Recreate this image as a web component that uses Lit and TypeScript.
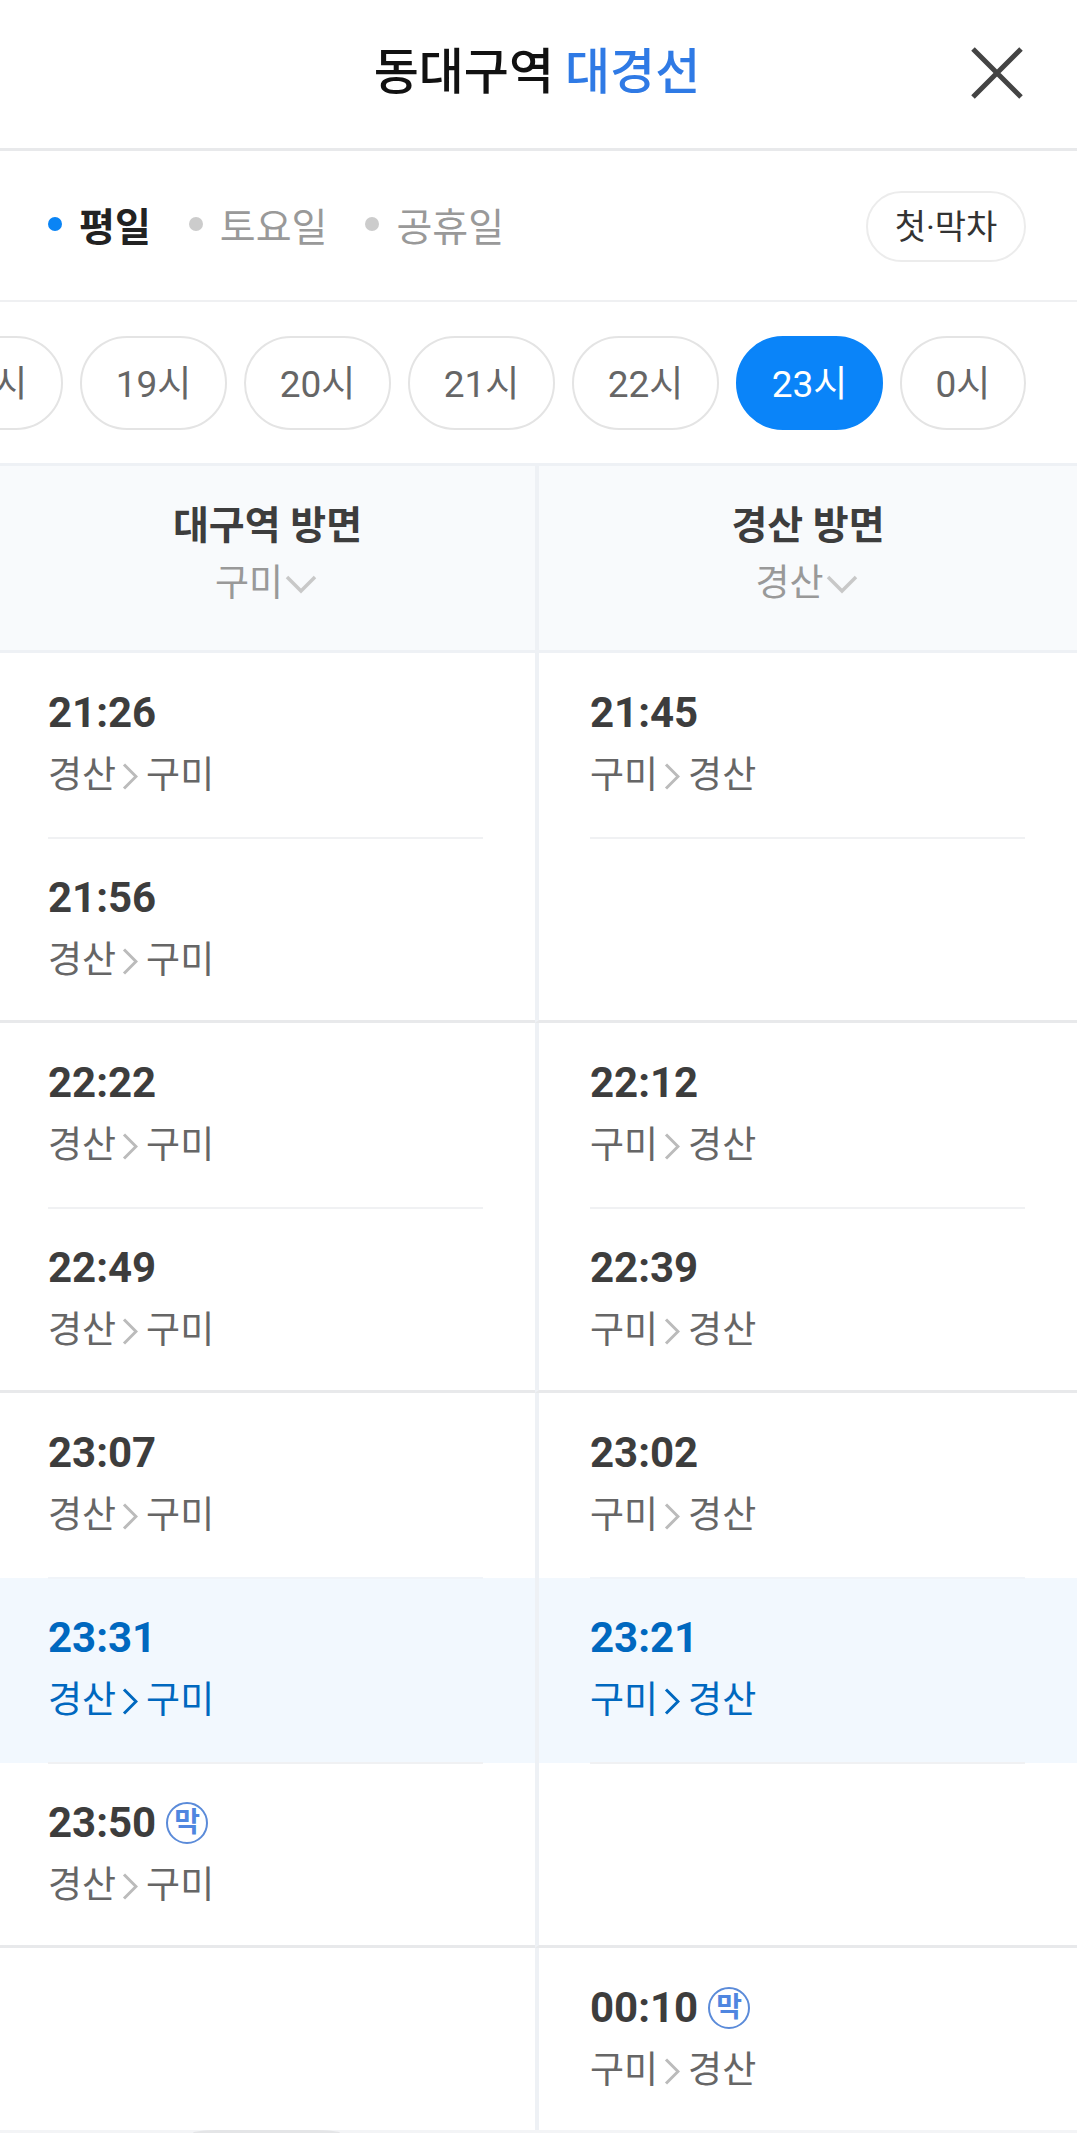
import { LitElement, html, css, svg } from "lit";
import { customElement } from "lit/decorators.js";

type Trip = { time: string; from: string; to: string; last?: boolean; now?: boolean };
type Row = { left?: Trip; right?: Trip };

const L = (time: string, extra: Partial<Trip> = {}): Trip => ({ time, from: "경산", to: "구미", ...extra });
const R = (time: string, extra: Partial<Trip> = {}): Trip => ({ time, from: "구미", to: "경산", ...extra });

const groups: Row[][] = [
  [{ left: L("21:26"), right: R("21:45") }, { left: L("21:56") }],
  [{ left: L("22:22"), right: R("22:12") }, { left: L("22:49"), right: R("22:39") }],
  [
    { left: L("23:07"), right: R("23:02") },
    { left: L("23:31", { now: true }), right: R("23:21", { now: true }) },
    { left: L("23:50", { last: true }) },
  ],
  [{ right: R("00:10", { last: true }) }],
];

const hours = ["18시", "19시", "20시", "21시", "22시", "23시", "0시"];

@customElement("app-root")
export class AppRoot extends LitElement {
  static styles = css`
    :host {
      display: block;
      width: 1077px;
      height: 2133px;
      overflow: hidden;
      position: relative;
      background: #fff;
      font-family: Roboto, "Noto Sans CJK KR", sans-serif;
      color: #222;
    }
    .head {
      height: 151px;
      box-sizing: border-box;
      border-bottom: 3px solid #e8e9eb;
      display: flex;
      align-items: center;
      justify-content: center;
      position: relative;
      font-size: 49px;
      font-weight: 500;
      color: #111;
      line-height: 1;
      padding: 0 3px 3px 0;
    }
    .head .line { color: #2f7ae5; margin-left: 11px; }
    .close { position: absolute; left: 970px; top: 46px; width: 54px; height: 54px; }
    .tabs {
      height: 151px;
      box-sizing: border-box;
      border-bottom: 2px solid #eff0f2;
      display: flex;
      align-items: center;
      padding: 0 51px 2px 48px;
    }
    .tab { display: flex; align-items: center; font-size: 39px; color: #999; margin-right: 38px; position: relative; top: -1px; }
    .tab i { width: 14px; height: 14px; border-radius: 50%; background: #ccc; margin-right: 17px; }
    .tab.on { color: #222; font-weight: 700; }
    .tab.on i { background: #0a84f5; }
    .first {
      margin: 4px 0 0 auto;
      width: 160px;
      height: 71px;
      box-sizing: border-box;
      border: 2px solid #ececec;
      border-radius: 36px;
      padding-bottom: 4px;
      display: flex;
      align-items: center;
      justify-content: center;
      font-size: 34px;
      color: #333;
    }
    .hours {
      height: 161px;
      display: flex;
      align-items: center;
      justify-content: flex-end;
      gap: 17px;
      padding-right: 51px;
      overflow: hidden;
    }
    .hour {
      flex: none;
      width: 147px;
      height: 94px;
      box-sizing: border-box;
      border: 2px solid #e4e4e4;
      border-radius: 47px;
      padding-bottom: 4px;
      display: flex;
      align-items: center;
      justify-content: center;
      font-size: 37px;
      color: #666;
    }
    .hour.zero { width: 126px; }
    .hour.on { background: #0a84f9; border-color: #0a84f9; color: #fff; }
    .cols { display: grid; grid-template-columns: 535px 542px; }
    .colhead {
      height: 190px;
      box-sizing: border-box;
      background: #f8fafc;
      border-top: 3px solid #eef1f5;
      border-bottom: 3px solid #eef1f5;
      display: flex;
      flex-direction: column;
      align-items: center;
    }
    .colhead + .colhead, .cell + .cell { border-left: 4px solid #eef1f5; }
    .colhead b { font-size: 39px; font-weight: 700; color: #3d3d3d; line-height: 60px; margin-top: 30px; }
    .sub { display: flex; align-items: center; font-size: 37px; color: #999; line-height: 52px; margin: 2px 3px 0 0; }
    .sub svg { width: 32px; height: 20px; margin-left: 2px; }
    .cell {
      height: 185px;
      padding: 30px 48px 0;
      box-sizing: border-box;
      position: relative;
      background: #fff;
    }
    .cell + .cell { padding-left: 51px; }
    .cell.now { background: #f2f8fe; }
    .sep {
      position: absolute;
      left: 48px;
      right: 52px;
      top: -1px;
      height: 2px;
      background: #f0f1f3;
    }
    .cell + .cell .sep { left: 51px; }
    .cell.now .sep { background: #f0f4f9; }
    .group > .cols:last-child .cell { border-bottom: 3px solid #e8e9eb; }
    .group.end > .cols:last-child .cell { border-bottom: 0; }
    .time {
      font-weight: 700;
      font-size: 42px;
      line-height: 60px;
      height: 60px;
      color: #3d3d3d;
      display: flex;
      align-items: center;
    }
    .now .time { color: #0068bf; }
    .badge {
      width: 42px;
      height: 42px;
      box-sizing: border-box;
      border: 2px solid #5b8bd9;
      border-radius: 50%;
      margin-left: 10px;
      display: flex;
      align-items: center;
      justify-content: center;
      font-size: 28px;
      font-weight: 700;
      color: #4f86e0;
      line-height: 1;
    }
    .route {
      display: flex;
      align-items: center;
      font-size: 37px;
      line-height: 56px;
      margin-top: 5px;
      color: #666;
    }
    .route svg { width: 16px; height: 27px; margin: 0 8px 0 6px; color: #bbb; }
    .now .route { color: #0068bf; }
    .now .route svg { color: #0068bf; }
    .foot { position: absolute; left: 0; right: 0; bottom: 0; height: 3px; background: #f3f4f6; }
    .grip { position: absolute; left: 193px; width: 147px; bottom: 0; height: 3px; border-radius: 24px 24px 0 0 / 3px 3px 0 0; background: #e4e5e7; }
  `;

  private closeIcon() {
    return html`<svg class="close" viewBox="0 0 54 54" fill="none" stroke="#444" stroke-width="5">
      <path d="M3 3 L51 51 M51 3 L3 51" />
    </svg>`;
  }

  private trip(t?: Trip, sep = false) {
    return html`<div class="cell ${t?.now ? "now" : ""}">
      ${sep ? html`<div class="sep"></div>` : ""}
      ${t
        ? html`<div class="time">${t.time}${t.last ? html`<span class="badge">막</span>` : ""}</div>
            <div class="route">
              ${t.from}<svg viewBox="0 0 16 27" fill="none" stroke="currentColor" stroke-width="3">
                ${svg`<path d="M2 1.5 L14 13.5 L2 25.5" />`}
              </svg>${t.to}
            </div>`
        : ""}
    </div>`;
  }

  render() {
    return html`
      <div class="head">
        <span>동대구역</span><span class="line">대경선</span>
        ${this.closeIcon()}
      </div>
      <div class="tabs">
        <div class="tab on"><i></i>평일</div>
        <div class="tab"><i></i>토요일</div>
        <div class="tab"><i></i>공휴일</div>
        <div class="first">첫·막차</div>
      </div>
      <div class="hours">
        ${hours.map(
          (h) => html`<div class="hour ${h === "23시" ? "on" : ""} ${h === "0시" ? "zero" : ""}">${h}</div>`
        )}
      </div>
      <div class="cols">
        ${[
          ["대구역 방면", "구미"],
          ["경산 방면", "경산"],
        ].map(
          ([a, b]) => html`<div class="colhead">
            <b>${a}</b>
            <div class="sub">
              ${b}<svg viewBox="0 0 32 20" fill="none" stroke="#c8c8c8" stroke-width="3.5"><path d="M2 3 L16 17 L30 3" /></svg>
            </div>
          </div>`
        )}
      </div>
      ${groups.map(
        (g, gi) => html`<div class="group ${gi === groups.length - 1 ? "end" : ""}">
          ${g.map(
            (r, i) => html`<div class="cols">${this.trip(r.left, i > 0)}${this.trip(r.right, i > 0)}</div>`
          )}
        </div>`
      )}
      <div class="foot"></div>
      <div class="grip"></div>
    `;
  }
}
